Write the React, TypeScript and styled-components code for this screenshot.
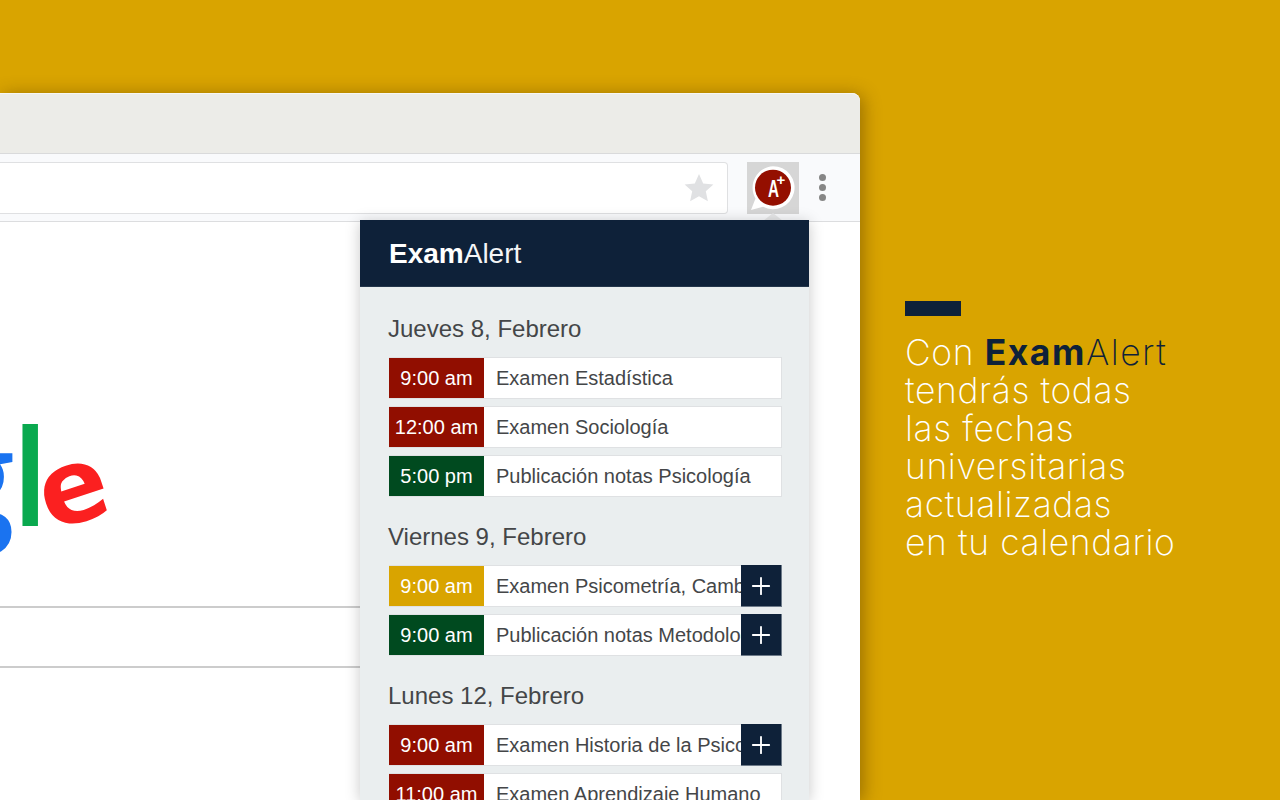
import React from 'react';
import styled, { createGlobalStyle } from 'styled-components';
import { Plus } from 'lucide-react';

const colors = {
    gold: '#d9a400',
    navy: '#0e2139',
    red: '#910e00',
    green: '#004a1f',
    panel: '#eaeeef',
    text: '#444648',
};

const GlobalStyle = createGlobalStyle`
    html, body {
        margin: 0;
        padding: 0;
        overflow: hidden;
    }
    * {
        box-sizing: border-box;
    }
`;

const Page = styled.div`
    width: 1280px;
    height: 800px;
    overflow: hidden;
    display: flex;
    background: ${colors.gold};
    font-family: "Liberation Sans", Arial, sans-serif;
`;

const BrowserWindow = styled.div`
    position: relative;
    flex: none;
    width: 860px;
    height: 707px;
    margin-top: 93px;
    display: flex;
    flex-direction: column;
    background: #fff;
    border-top-right-radius: 8px;
    box-shadow: 3px 2px 18px rgba(70, 45, 0, 0.45);
`;

const TabBar = styled.div`
    height: 61px;
    flex: none;
    background: #ecece8;
    border-top: 1px solid #f6f6f3;
    border-top-right-radius: 8px;
    border-bottom: 1px solid #d9dadb;
`;

const ToolBar = styled.div`
    height: 68px;
    flex: none;
    display: flex;
    align-items: center;
    background: #f9fafc;
    border-bottom: 1px solid #dcdddf;
`;

const AddressBar = styled.div`
    width: 728px;
    height: 52px;
    flex: none;
    display: flex;
    align-items: center;
    justify-content: flex-end;
    padding-right: 13px;
    background: #fff;
    border: 1px solid #dfe0e2;
    border-left: none;
    border-radius: 0 4px 4px 0;
`;

const ExtensionButton = styled.div`
    width: 52px;
    height: 52px;
    margin-left: 19px;
    flex: none;
    background: #d6d6d6;
`;

const MenuDots = styled.div`
    margin-left: 20px;
    display: flex;
    flex-direction: column;
    gap: 3px;
`;

const Dot = styled.span`
    width: 7px;
    height: 7px;
    border-radius: 50%;
    background: #868686;
`;

const Content = styled.div`
    flex: 1;
    display: flex;
    flex-direction: column;
    overflow: hidden;
`;

const LogoWrap = styled.div`
    width: 107px;
    height: 384px;
    flex: none;
    display: flex;
    justify-content: flex-end;
    white-space: nowrap;
    padding-top: 172px;
`;

const LogoText = styled.div`
    font-family: "Open Sans", sans-serif;
    font-size: 134px;
    line-height: 160px;
    font-weight: 600;
    letter-spacing: -3px;
`;

const LogoLetter = styled.span<{ $color: string; $tilt?: boolean }>`
    color: ${p => p.$color};
    display: inline-block;
    margin-left: ${p => (p.$tilt ? '-15px' : '0')};
    font-weight: ${p => (p.$tilt ? 700 : 600)};
    transform: ${p => (p.$tilt ? 'translateY(9px) rotate(-18deg) scale(0.88, 0.78)' : 'none')};
`;

const SearchLine = styled.div<{ $gap: number }>`
    width: 360px;
    height: 2px;
    margin-top: ${p => p.$gap}px;
    background: #cccccc;
`;

const Arrow = styled.div`
    position: absolute;
    left: 763px;
    top: 120px;
    width: 0;
    height: 0;
    border-left: 10px solid transparent;
    border-right: 10px solid transparent;
    border-bottom: 8px solid #e6e7e8;
`;

const Popup = styled.div`
    position: absolute;
    left: 360px;
    top: 127px;
    width: 449px;
    height: 580px;
    overflow: hidden;
    background: ${colors.panel};
    box-shadow: 0 2px 14px rgba(0, 0, 0, 0.22);
`;

const PopupHeader = styled.div`
    height: 67px;
    display: flex;
    align-items: center;
    padding: 1px 0 0 29px;
    background: ${colors.navy};
    color: #f4f5f6;
    font-size: 28px;
    border-bottom: 1px solid #24364b;
`;

const Brand = styled.b`
    font-weight: 700;
    color: #fff;
`;

const PopupBody = styled.div`
    padding: 27px 27px 0 28px;
    display: flex;
    flex-direction: column;
`;

const DayTitle = styled.h2<{ $top?: number }>`
    margin: ${p => p.$top ?? 0}px 0 13px;
    font-size: 24px;
    line-height: 30px;
    font-weight: 400;
    color: ${colors.text};
`;

const Rows = styled.div`
    display: flex;
    flex-direction: column;
    gap: 7px;
`;

const Row = styled.div`
    margin-left: 1px;
    height: 42px;
    display: flex;
    background: #fff;
    border: 1px solid #dfe1e3;
    border-left: none;
`;

const Time = styled.div<{ $color: string }>`
    width: 95px;
    flex: none;
    display: flex;
    align-items: center;
    justify-content: center;
    background: ${p => p.$color};
    color: #fff;
    font-size: 20px;
`;

const Label = styled.div`
    flex: 1;
    min-width: 0;
    padding-left: 12px;
    display: flex;
    align-items: center;
    white-space: nowrap;
    overflow: hidden;
    font-size: 20px;
    color: ${colors.text};
`;

const AddButton = styled.button`
    width: 41px;
    flex: none;
    margin: -1px -1px -1px 0;
    padding: 0;
    display: flex;
    align-items: center;
    justify-content: center;
    background: ${colors.navy};
    color: #fff;
    border: 1px solid #6d7a89;
    border-width: 0 1px 1px 0;
`;

const Aside = styled.div`
    margin-left: 45px;
    padding-top: 301px;
`;

const AccentBar = styled.div`
    width: 56px;
    height: 15px;
    background: ${colors.navy};
`;

const Pitch = styled.p`
    margin: 18px 0 0;
    font-family: Inter, "Open Sans", sans-serif;
    font-weight: 200;
    font-size: 35.5px;
    line-height: 38px;
    letter-spacing: 0.6px;
    color: #fff;
    white-space: nowrap;
`;

const PitchBrand = styled.span`
    color: ${colors.navy};
    letter-spacing: 1.5px;
`;

const PitchBold = styled.b`
    font-weight: 700;
`;

const Star = () => (
    <svg width="30" height="30" viewBox="0 0 30 30">
        <polygon fill="#e0e1e3" points="15,1 19.2,10.4 29.4,11.4 21.8,18.2 23.9,28.3 15,23.2 6.1,28.3 8.2,18.2 0.6,11.4 10.8,10.4" />
    </svg>
);

const ExtensionIcon = () => (
    <svg width="52" height="52" viewBox="0 0 52 52">
        <path fill="#fff" d="M26 4.2a21.5 21.5 0 1 1-10 40.5l-12 3.3 4.5-11.5A21.5 21.5 0 0 1 26 4.2z" />
        <circle cx="26" cy="25.7" r="18" fill="#940f00" />
        <text x="21" y="35" fontFamily="'Liberation Sans', sans-serif" fontWeight="700" fontSize="24" fill="#fff" textLength="11" lengthAdjust="spacingAndGlyphs">A</text>
        <text x="29.6" y="22.5" fontFamily="'Liberation Sans', sans-serif" fontWeight="700" fontSize="15" fill="#fff">+</text>
    </svg>
);

interface Exam {
    time: string;
    color: string;
    label: string;
    add?: boolean;
}

const days: { title: string; top?: number; exams: Exam[] }[] = [
    {
        title: 'Jueves 8, Febrero',
        exams: [
            { time: '9:00 am', color: colors.red, label: 'Examen Estadística' },
            { time: '12:00 am', color: colors.red, label: 'Examen Sociología' },
            { time: '5:00 pm', color: colors.green, label: 'Publicación notas Psicología' },
        ],
    },
    {
        title: 'Viernes 9, Febrero',
        top: 25,
        exams: [
            { time: '9:00 am', color: colors.gold, label: 'Examen Psicometría, Cambio de hora', add: true },
            { time: '9:00 am', color: colors.green, label: 'Publicación notas Metodología', add: true },
        ],
    },
    {
        title: 'Lunes 12, Febrero',
        top: 25,
        exams: [
            { time: '9:00 am', color: colors.red, label: 'Examen Historia de la Psicología', add: true },
            { time: '11:00 am', color: colors.red, label: 'Examen Aprendizaje Humano' },
        ],
    },
];

const App: React.FC = () => {
    return (
        <Page>
            <GlobalStyle />
            <BrowserWindow>
                <TabBar />
                <ToolBar>
                    <AddressBar>
                        <Star />
                    </AddressBar>
                    <ExtensionButton>
                        <ExtensionIcon />
                    </ExtensionButton>
                    <MenuDots>
                        <Dot />
                        <Dot />
                        <Dot />
                    </MenuDots>
                </ToolBar>
                <Content>
                    <LogoWrap>
                        <LogoText>
                            <LogoLetter $color="#1a73f0">g</LogoLetter>
                            <LogoLetter $color="#0aa94f">l</LogoLetter>
                            <LogoLetter $color="#fb2020" $tilt>e</LogoLetter>
                        </LogoText>
                    </LogoWrap>
                    <SearchLine $gap={0} />
                    <SearchLine $gap={58} />
                </Content>
                <Arrow />
                <Popup>
                    <PopupHeader>
                        <span>
                            <Brand>Exam</Brand>Alert
                        </span>
                    </PopupHeader>
                    <PopupBody>
                        {days.map(day => (
                            <React.Fragment key={day.title}>
                                <DayTitle $top={day.top}>{day.title}</DayTitle>
                                <Rows>
                                    {day.exams.map(exam => (
                                        <Row key={exam.label}>
                                            <Time $color={exam.color}>{exam.time}</Time>
                                            <Label>{exam.label}</Label>
                                            {exam.add && (
                                                <AddButton>
                                                    <Plus size={28} strokeWidth={1.6} />
                                                </AddButton>
                                            )}
                                        </Row>
                                    ))}
                                </Rows>
                            </React.Fragment>
                        ))}
                    </PopupBody>
                </Popup>
            </BrowserWindow>
            <Aside>
                <AccentBar />
                <Pitch>
                    Con{' '}
                    <PitchBrand>
                        <PitchBold>Exam</PitchBold>Alert
                    </PitchBrand>
                    <br />
                    tendrás todas
                    <br />
                    las fechas
                    <br />
                    universitarias
                    <br />
                    actualizadas
                    <br />
                    en tu calendario
                </Pitch>
            </Aside>
        </Page>
    );
};

export default App;
